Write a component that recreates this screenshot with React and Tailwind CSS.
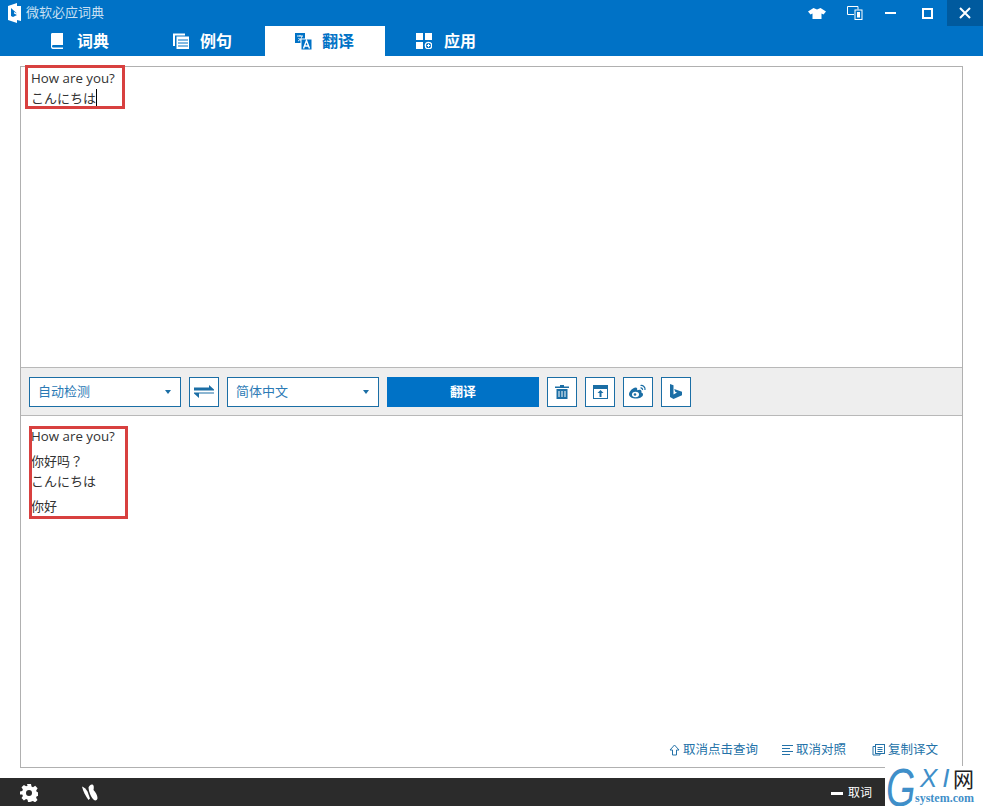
const cjk = { fontFamily: '"Open Sans","Noto Sans CJK SC","Noto Sans CJK JP",sans-serif' };

function BookIcon() {
  return <svg width="14" height="16" viewBox="0 0 14 16" fill="#fff"><path d="M2 0h11v12H3.200a1.200 1.200 0 0 0 0 2.400H13V16H2.500A2 2 0 0 1 1 14V1.200A1.200 1.200 0 0 1 2 0z" /></svg>;
}
function DocsIcon({ color = "#fff" }) {
  return <svg width="16" height="16" viewBox="0 0 16 16" fill="none" stroke={color}><path d="M1 13V1.500h11" strokeWidth="2" /><rect x="4" y="4" width="11.500" height="11.500" strokeWidth="1" fill="#fff" /><path d="M5 7h10M5 10h10M5 13h10" stroke="#0072c6" strokeWidth="1" /></svg>;
}
function TranslateIcon() {
  return <svg width="17" height="17" viewBox="0 0 17 17"><rect x="0" y="0" width="10" height="10" fill="#0072c6" /><path d="M2 3h6M5 2v1.500M3 8c2.500-1 3.500-3 4-5M3.500 5c1 1.500 2 2.500 4 3" stroke="#fff" strokeWidth="0.9" fill="none" /><rect x="6" y="6" width="11" height="11" fill="#0072c6" stroke="#fff" /><path d="M8.500 15.500l3-8 3 8M9.600 13h3.800" stroke="#fff" strokeWidth="1.400" fill="none" /></svg>;
}
function AppsIcon() {
  return <svg width="16" height="16" viewBox="0 0 16 16" fill="#fff"><rect x="0" y="0" width="7" height="7" /><rect x="9" y="0" width="7" height="7" /><rect x="0" y="9" width="7" height="7" /><circle cx="12.500" cy="12.500" r="3.200" fill="none" stroke="#fff" strokeWidth="1.300" /><path d="M12.500 10.800v3.400M10.800 12.500h3.400" stroke="#fff" /></svg>;
}
function Tab({ icon, label, active, width, iconWidth = "w-[27px]", pad = "pl-[30px]" }) {
  return (
    <div className={`h-[30px] flex items-center shrink-0 ${pad} ${width} ${active ? "bg-white text-[#0072c6]" : "text-white"}`}>
      <span className={`flex items-center ${iconWidth}`}>{icon}</span>
      <span className="text-[16px] font-bold tracking-normal" style={cjk}>{label}</span>
    </div>
  );
}
function Select({ label }) {
  return (
    <div className="w-[152px] h-[30px] bg-white border border-[#1b6ea5] flex items-center justify-between pl-[8px] pr-[9px] text-[13px] text-[#2b7ab5]" style={cjk}>
      <span className="pt-[1px]">{label}</span>
      <span className="w-0 h-0 border-x-[3px] border-x-transparent border-t-[4px] border-t-[#1b6ea5]" />
    </div>
  );
}
function IconBtn({ children }) {
  return <div className="w-[30px] h-[30px] bg-white border border-[#1b6ea5] flex items-center justify-center shrink-0">{children}</div>;
}
function Action({ icon, label, className = "" }) {
  return <div className={`flex items-center gap-[3px] text-[12.500px] text-[#2472a8] ${className}`} style={cjk}>{icon}<span>{label}</span></div>;
}

export default function App() {
  return (
    <div className="relative w-[983px] h-[806px] bg-white overflow-hidden flex flex-col text-[#333]" style={cjk}>
      <header className="h-[56px] bg-[#0072c6] flex flex-col shrink-0">
        <div className="h-[26px] flex items-center pl-[8px] relative">
          <svg width="13" height="20" viewBox="0 0 13 20" className="mr-[5px]"><path d="M0 3l9-3v3h4v15l-4-1v3L0 17z" fill="#fff" /><path d="M3 5v8l2 1 4-2-3-1.500V9l3 1.500" fill="#0072c6" /></svg>
          <span className="text-[13px] text-[#c9e0f3]">微软必应词典</span>
          <div className="ml-auto flex items-center h-[26px]">
            <div className="w-[38px] flex justify-center">
              <svg width="18" height="11" viewBox="0 0 18 11" fill="#fff"><path d="M5.500 0L9 1.500 12.500 0 18 3.500l-2.500 3-2-1V11h-9V5.500l-2 1L0 3.500z" /></svg>
            </div>
            <div className="w-[37px] flex justify-center">
              <svg width="16" height="14" viewBox="0 0 16 14" fill="none" stroke="#fff"><path d="M11 3.500V.5H.5v8H7" /><rect x="8" y="4" width="7" height="9.500" /><rect x="10" y="6" width="3" height="5.500" fill="#fff" stroke="none" /></svg>
            </div>
            <div className="w-[35px] flex justify-center"><div className="w-[11px] h-[2px] bg-white" /></div>
            <div className="w-[39px] flex justify-center"><div className="w-[11px] h-[11px] border-2 border-white" /></div>
            <div className="w-[36px] h-[26px] bg-[#005a9e] flex items-center justify-center">
              <svg width="12" height="12" viewBox="0 0 12 12" stroke="#fff" strokeWidth="2"><path d="M1 1l10 10M11 1L1 11" /></svg>
            </div>
          </div>
        </div>
        <nav className="h-[30px] flex pl-[20px]">
          <Tab icon={<BookIcon />} label="词典" width="w-[123px]" />
          <Tab icon={<DocsIcon />} label="例句" width="w-[122px]" />
          <Tab icon={<TranslateIcon />} label="翻译" width="w-[120px]" active />
          <Tab icon={<AppsIcon />} label="应用" width="w-[120px]" iconWidth="w-[28px]" pad="pl-[31px]" />
        </nav>
      </header>

      <main className="flex-1 px-[20px] pt-[10px] pb-[10px] flex flex-col min-h-0">
        <div className="w-[943px] flex-1 border border-[#b0b0b0] flex flex-col min-h-0">
          <div className="h-[300px] pl-[10px] pt-[1px] text-[13px] leading-[20px] shrink-0 text-[#333]">
            <div className="text-[13.300px]">How are you?</div>
            <div className="flex items-center">こんにちは<span className="w-px h-[18px] bg-black" /></div>
          </div>
          <div className="h-[49px] shrink-0 bg-[#eeeeee] border-y border-[#b8b8b8] flex items-center pl-[8px] gap-[8px]">
            <Select label="自动检测" />
            <IconBtn>
              <svg width="20" height="13" viewBox="0 0 20 13" fill="#1b6ea5"><path d="M0 2.500h15V0l5 4.500v1H0zM20 7.500v1H5V13L0 8.500v-1z" /></svg>
            </IconBtn>
            <Select label="简体中文" />
            <div className="w-[152px] h-[30px] bg-[#0072c6] text-white text-[13px] font-bold flex items-center justify-center shrink-0">翻译</div>
            <IconBtn>
              <svg width="14" height="14" viewBox="0 0 14 14" fill="#1b6ea5"><path d="M5 0h4v1.500h5V3H0V1.500h5z" /><path d="M1.500 4h11v10h-11zM3.500 6v6h1V6zm3 0v6h1V6zm3 0v6h1V6z" fillRule="evenodd" /></svg>
            </IconBtn>
            <IconBtn>
              <svg width="15" height="14" viewBox="0 0 15 14"><rect x=".5" y=".5" width="14" height="13" fill="#fff" stroke="#1b6ea5" /><rect x="0" y="0" width="15" height="4" fill="#1b6ea5" /><path d="M7.500 5l3 3H8.500v4h-2V8h-2z" fill="#1b6ea5" /></svg>
            </IconBtn>
            <IconBtn>
              <svg width="18" height="15" viewBox="0 0 18 15"><path d="M7 14.500c-3.500 0-7-1.500-7-4.300C0 7.500 4 3.500 6.500 3.500c2 0 2 1.500 1.500 2.800 2-1 4.500-1 4.500 1 0 .5 0 1-.5 1 1.500.5 2 1.200 2 2.200 0 2.500-3.500 4-7 4z" fill="#1b6ea5" /><ellipse cx="6.500" cy="10.500" rx="3.500" ry="2.700" fill="#fff" /><circle cx="6" cy="10.500" r="1.300" fill="#1b6ea5" /><path d="M11.500 1.500c2.500-.5 5 1.500 4.500 4.500M11.500 4c1.200-.2 2.300.8 2 2" fill="none" stroke="#1b6ea5" strokeWidth="1.200" /></svg>
            </IconBtn>
            <IconBtn>
              <svg width="12" height="15" viewBox="0 0 12 15" fill="#1b6ea5"><path d="M0 0l3.500 1.200v9.300l3.500-2-1.800-.8L4.200 5 12 7.800v3.500L3.500 15 0 13z" /></svg>
            </IconBtn>
          </div>
          <div className="flex-1 relative pl-[10px] pt-[10px] text-[13px] leading-[20px] text-[#333]">
            <div className="text-[13.300px]">How are you?</div>
            <div className="mt-[5px]">你好吗<span style={{ fontFamily: '"Noto Sans CJK JP",sans-serif' }}>？</span></div>
            <div>こんにちは</div>
            <div className="mt-[5px]">你好</div>
            <div className="absolute right-[24px] bottom-[7px] flex items-center leading-[20px]">
              <Action label="取消点击查询" icon={<svg width="11" height="12" viewBox="0 0 11 12" fill="none" stroke="#2472a8"><path d="M5.500 1L1 6h2.500v5h4V6H10z" /></svg>} />
              <Action className="ml-[24px]" label="取消对照" icon={<svg width="11" height="10" viewBox="0 0 11 10" stroke="#2472a8"><path d="M0 .5h11M0 3.500h8M0 6.500h11M0 9.500h8" /></svg>} />
              <Action className="ml-[26px]" label="复制译文" icon={<svg width="13" height="12" viewBox="0 0 13 12" fill="none" stroke="#2472a8"><path d="M3 2.500H1V11h7V9.500" /><rect x="3.500" y=".5" width="9" height="9" /><path d="M5.500 3.500h5M5.500 5.500h5M5.500 7.500h5" /></svg>} />
            </div>
          </div>
        </div>
      </main>

      <footer className="h-[28px] shrink-0 bg-[#2b2b2b] flex items-center pt-[2px] text-white">
        <div className="ml-[20px] w-[18px] h-[18px]">
          <svg width="18" height="18" viewBox="0 0 18 18" fill="#fff"><path fillRule="evenodd" d="M7 0h4l.5 2.600 1.500.6 2.200-1.400 2.400 2.400-1.400 2.200.6 1.500 2.200.5v3.400l-2.300.4-.6 1.500 1.400 2.200-2.400 2.400-2.200-1.400-1.500.6L10 18H8l-.4-2.300-1.500-.6-2.200 1.400-2.400-2.400 1.400-2.200-.6-1.500L0 10.600V7.400l2.300-.4.600-1.500L1.500 3.300 3.900.9l2.200 1.400 1.500-.6zM9 6a3 3 0 1 0 0 6 3 3 0 0 0 0-6z" /></svg>
        </div>
        <div className="ml-[44px] w-[16px] h-[18px]">
          <svg width="16" height="17" viewBox="0 0 16 17" fill="#fff"><path d="M0 2.500C2 3 4 5 5.500 7.500L8 14.500 6.500 16C3.500 12 1 7 0 2.500z" /><path d="M6.500 3.500C7 1.500 9 0 10.500.5c1.500.5 1.500 3 1 5.500 2 2 4 5.500 4 8 0 2-2 3-3.500 2C9.500 14 7 9 6.500 3.500z" /></svg>
        </div>
        <div className="ml-auto mr-[111px] flex items-center gap-[5px] text-[12px]">
          <span className="w-[12px] h-[3px] bg-white" />
          <span>取词</span>
        </div>
      </footer>

      {/* annotation boxes */}
      <div className="absolute left-[25px] top-[65px] w-[100px] h-[44px] border-[3px] border-[#d8403f]" />
      <div className="absolute left-[29px] top-[426px] w-[99px] h-[93px] border-[3px] border-[#d8403f]" />

      {/* watermark */}
      <div className="absolute right-0 bottom-0 w-[98px] h-[40px] bg-white" />
      <div className="absolute right-0 top-[758px] w-[20px] h-[10px] bg-white" />
      <span className="absolute left-[886px] top-[767px] w-[28px] overflow-visible origin-left scale-x-[0.7] text-[#3f8fc9] text-[54px] leading-[40px] italic" style={{ fontFamily: '"Liberation Sans",sans-serif' }}>G</span>
      <span className="absolute left-[920px] top-[766px] text-[#3f8fc9] text-[26px] leading-[24px] italic tracking-[5px]" style={{ fontFamily: '"Liberation Sans",sans-serif' }}>XI</span>
      <span className="absolute left-[953px] top-[766px] text-[#222] text-[21px] leading-[24px]" style={{ fontFamily: '"Noto Sans CJK SC",sans-serif' }}>网</span>
      <span className="absolute left-[915px] top-[791px] text-[#3f8fc9] text-[12px] leading-[14px] font-bold" style={{ fontFamily: '"Liberation Serif",serif' }}>system.com</span>
    </div>
  );
}
